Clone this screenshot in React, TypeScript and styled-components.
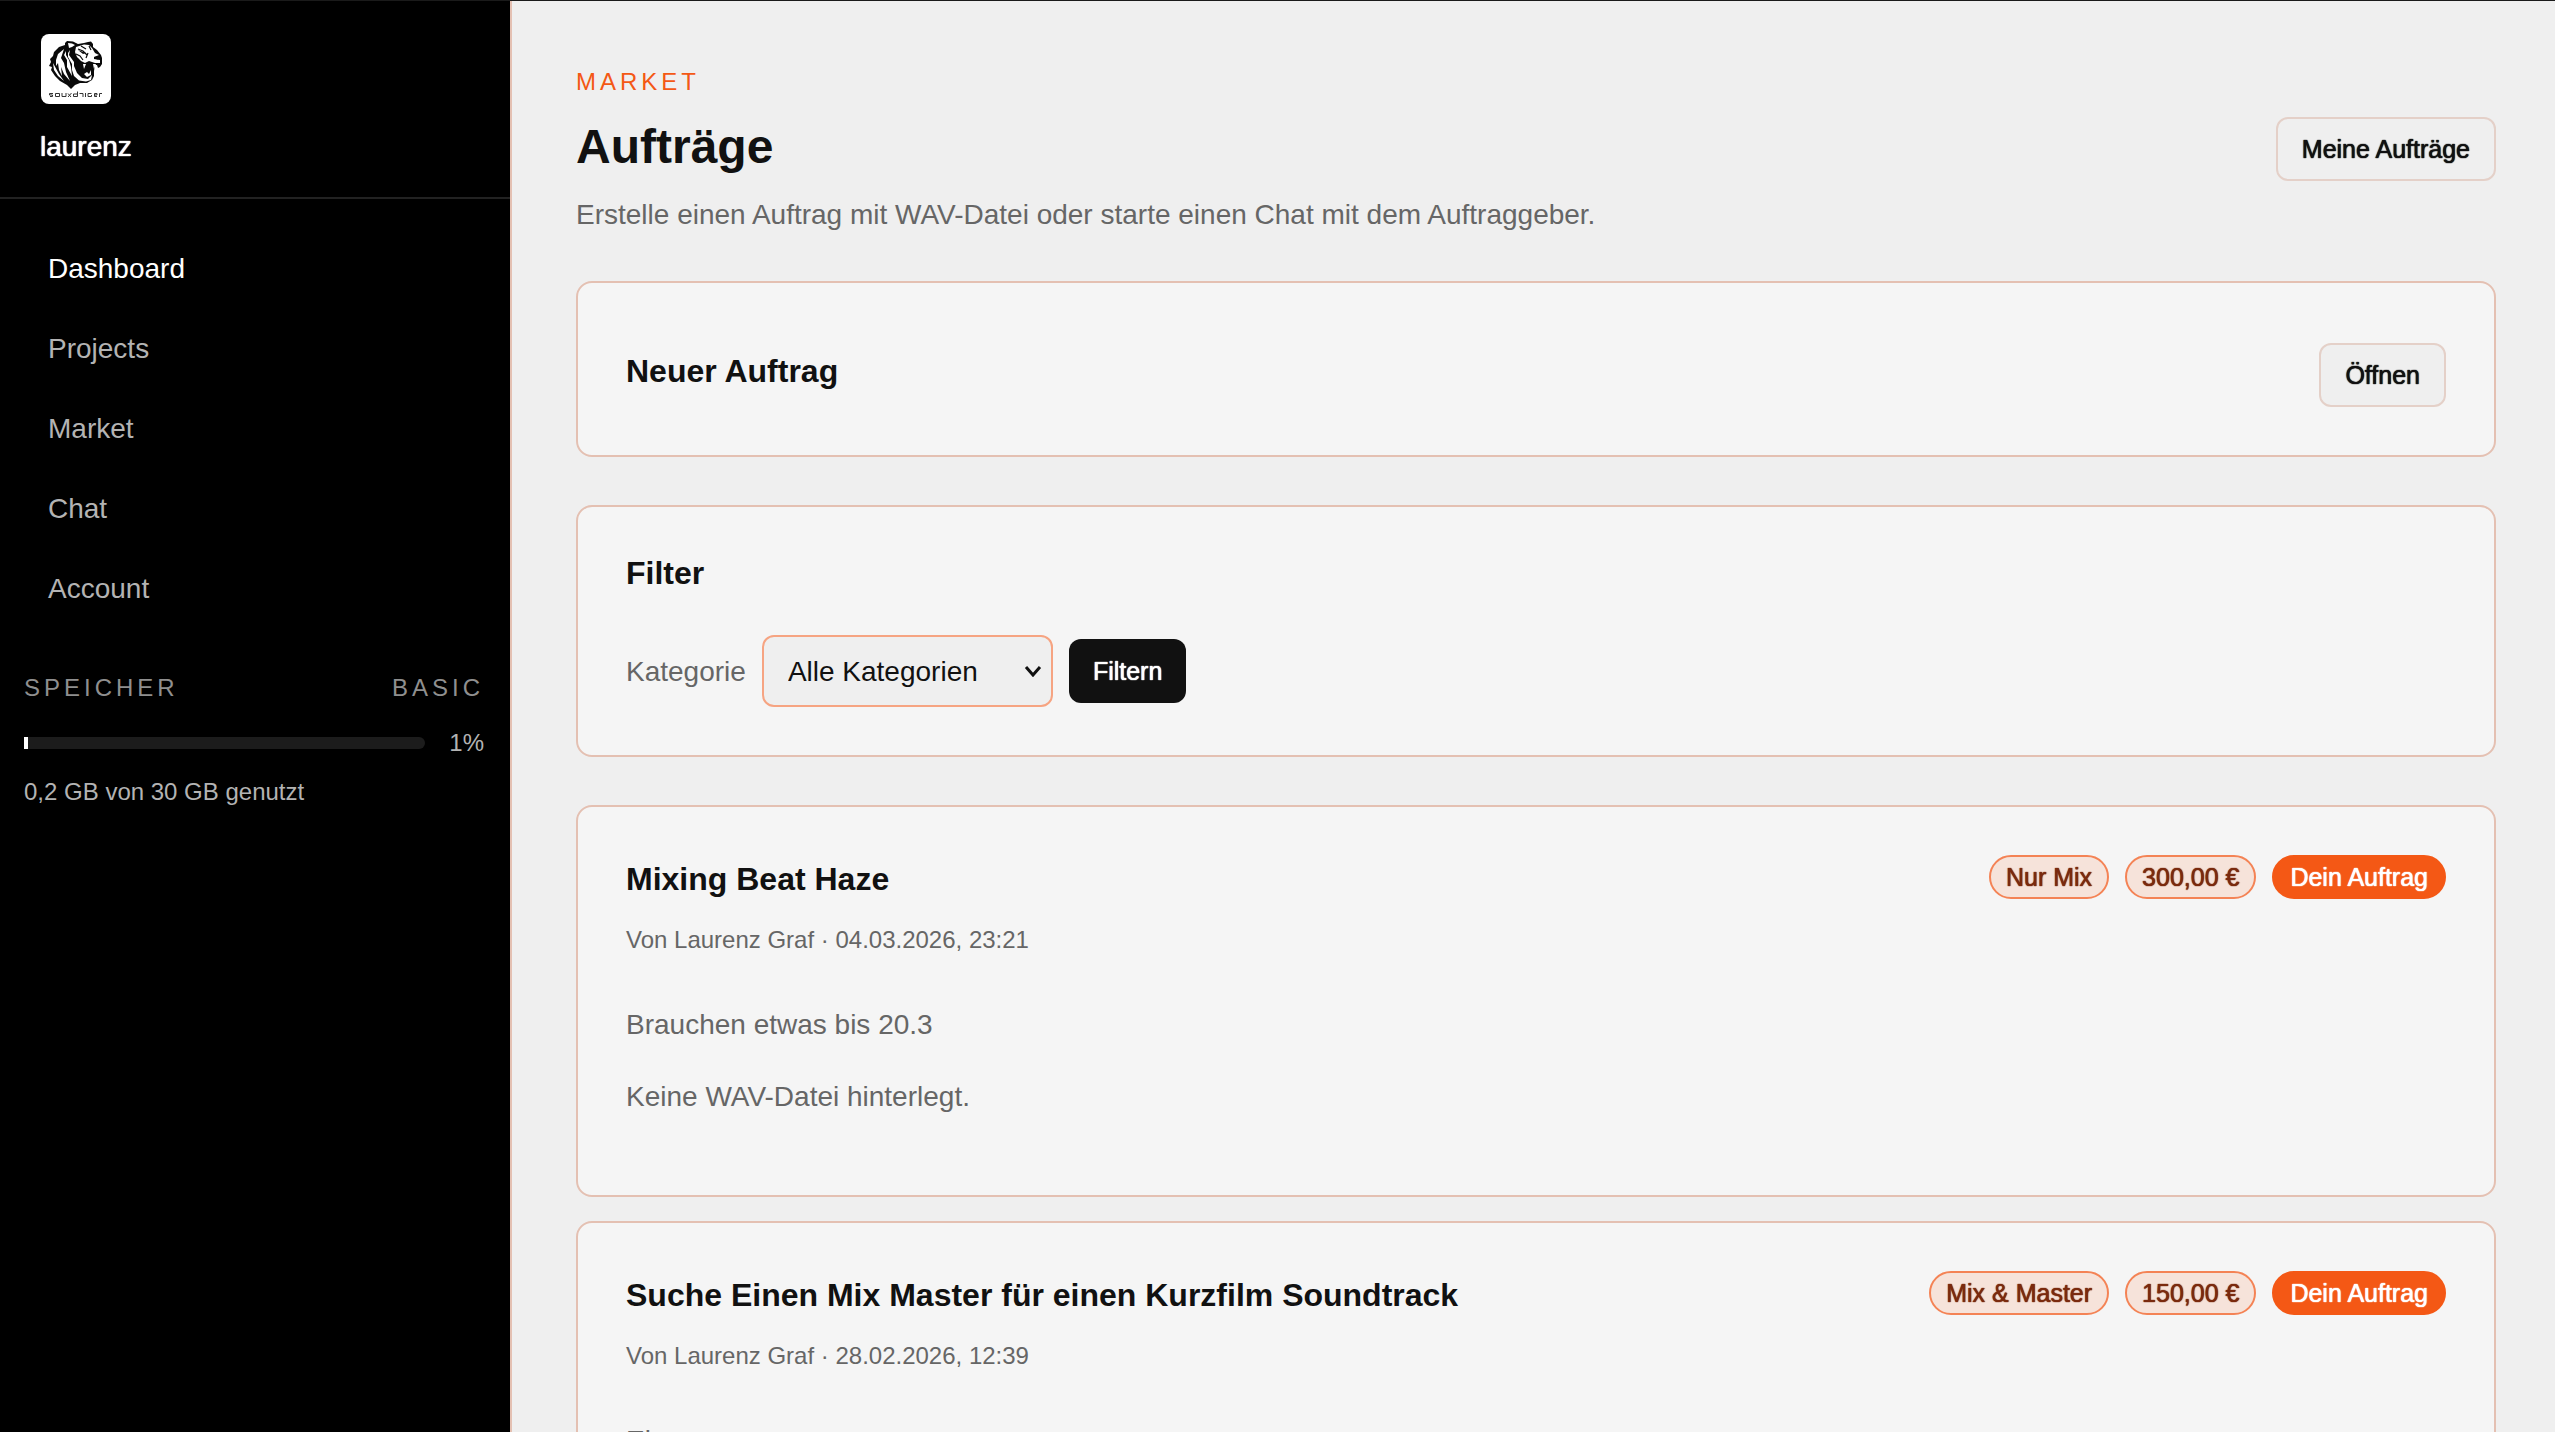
import React from 'react';
import styled, { createGlobalStyle, css } from 'styled-components';

const GlobalStyle = createGlobalStyle`
  *, *::before, *::after { box-sizing: border-box; }
  html { background: #efefef; }
  body {
    margin: 0;
    border-top: 1px solid #1a1a1a;
    color: #111111;
    font-family: "Liberation Sans", Arial, Helvetica, sans-serif;
    font-size: 28px;
    line-height: 36px;
    height: 100vh;
    overflow: hidden;
  }
  h1, h2, p { margin: 0; }
  button, select { font: inherit; color: inherit; cursor: pointer; }
`;

const medium = css`
  text-shadow: 0 0 1px currentColor, 0 0 1px currentColor;
`;

const Shell = styled.div`
  display: grid;
  grid-template-columns: 512px minmax(0, 1fr);
  min-height: 100vh;
`;

const Sidebar = styled.aside`
  background: #000000;
  border-right: 2px solid #e4c0b2;
`;

const Brand = styled.div`
  display: flex;
  flex-direction: column;
  gap: 24px;
  padding: 32px 40px;
  border-bottom: 2px solid #222222;
  color: #ffffff;
`;

const LogoTile = styled.svg`
  display: block;
  width: 72px;
  height: 72px;
`;

const UserName = styled.span`
  ${medium}
`;

const Nav = styled.nav`
  display: flex;
  flex-direction: column;
  gap: 8px;
  padding: 34px 24px 0;
`;

const NavLink = styled.a<{ $active?: boolean }>`
  padding: 18px 24px;
  color: ${(p) => (p.$active ? '#ffffff' : '#b3b3b3')};
  text-decoration: none;
`;

const Storage = styled.section`
  display: flex;
  flex-direction: column;
  gap: 13px;
  padding: 45px 26px 45px 24px;
  color: #b3b3b3;
  font-size: 24px;
`;

const StorageHead = styled.div`
  display: flex;
  justify-content: space-between;
  padding-bottom: 6px;
  color: #8f8f8f;
  letter-spacing: 4px;
  text-transform: uppercase;
`;

const Meter = styled.div`
  display: flex;
  align-items: center;
  gap: 24px;
`;

const Track = styled.div`
  flex: 1;
  height: 12px;
  border-radius: 0 6px 6px 0;
  background: #1c1c1c;
  overflow: hidden;
`;

const Fill = styled.div`
  height: 100%;
  background: #ffffff;
`;

const Main = styled.main`
  display: flex;
  flex-direction: column;
  gap: 48px;
  padding: 63px 59px 64px 64px;
`;

const PageHead = styled.header`
  display: flex;
  align-items: center;
  justify-content: space-between;
`;

const Eyebrow = styled.p`
  color: #f45815;
  font-size: 24px;
  letter-spacing: 4px;
  text-transform: uppercase;
`;

const PageTitle = styled.h1`
  padding: 15px 0 18px;
  font-size: 48px;
  line-height: 64px;
`;

const Muted = styled.p`
  color: #666666;
`;

const Card = styled.section`
  padding: 48px;
  border: 2px solid #e4c0b2;
  border-radius: 16px;
  background: #f5f5f5;
`;

const CardTitle = styled.h2`
  font-size: 32px;
  line-height: 36px;
`;

const SplitRow = styled.div`
  display: flex;
  align-items: flex-start;
  justify-content: space-between;
`;

const NewJobRow = styled(SplitRow)`
  padding-top: 12px;

  ${CardTitle} {
    padding-top: 10px;
  }
`;

const Button = styled.button<{ $dark?: boolean }>`
  height: 64px;
  padding: 0 24px;
  border: ${(p) => (p.$dark ? '0' : '2px solid #e4d0c8')};
  border-radius: 12px;
  background: ${(p) => (p.$dark ? '#111111' : '#efefef')};
  color: ${(p) => (p.$dark ? '#ffffff' : '#111111')};
  font-size: 25px;
  white-space: nowrap;
  ${medium}
`;

const FilterForm = styled.form`
  display: flex;
  align-items: center;
  gap: 16px;
  padding-top: 44px;
`;

const FilterLabel = styled.label`
  padding-top: 2px;
  color: #666666;
`;

const SelectWrap = styled.div`
  display: grid;
  align-items: center;
`;

const Select = styled.select`
  grid-area: 1 / 1;
  width: 291px;
  height: 72px;
  padding: 2px 24px 0;
  border: 2px solid #f6a482;
  border-radius: 12px;
  background: #efefef;
  appearance: none;
`;

const Chevron = styled.svg`
  grid-area: 1 / 1;
  justify-self: end;
  width: 18px;
  height: 12px;
  margin-right: 11px;
  pointer-events: none;
`;

const JobList = styled.div`
  display: flex;
  flex-direction: column;
  gap: 24px;
`;

const JobInfo = styled.div`
  display: flex;
  flex-direction: column;
  gap: 25px;
  padding-top: 6px;
`;

const JobMeta = styled.p`
  color: #666666;
  font-size: 24px;
`;

const JobBody = styled.div`
  display: flex;
  flex-direction: column;
  gap: 36px;
  padding: 49px 0 32px;
`;

const Tags = styled.div`
  display: flex;
  gap: 16px;
`;

const Tag = styled.span<{ $own?: boolean }>`
  display: inline-flex;
  align-items: center;
  height: 44px;
  padding: 0 ${(p) => (p.$own ? 16 : 15)}px;
  border: 2px solid ${(p) => (p.$own ? '#f45815' : '#f48355')};
  border-radius: 22px;
  background: ${(p) => (p.$own ? '#f45815' : '#f6e3da')};
  color: ${(p) => (p.$own ? '#ffffff' : '#7a2a0e')};
  font-size: 25px;
  white-space: nowrap;
  ${medium}
`;

function Logo() {
  return (
    <LogoTile viewBox="0 0 72 72" role="img" aria-label="Soundtiger">
      <rect x="1" y="1" width="70" height="70" rx="8" fill="#fff" />
      <path
        fill="#0a0a0a"
        d="M25 10 L27 8 L33 8.500 L38 11 L44 10 L48 9 L51 8.500 L53 11 L53 14 L57 17 L61 22 L62 25 L62 31 L60 34 L58 35 L57 32 L55 32 L54 38 L54 43 L52 47 L47 50 L40 50 L35 52 L31 56 L27 52 L20 48 L15 43 L11 37 L12 34 L9 33 L11 29 L10 26 L13 23 L14 19 L19 14 L25 12 Z"
      />
      <g fill="#fff">
        <path d="M28 10 L32 10.500 L35 12 L32 14 L29 15 Z" />
        <path d="M36 14 L44 11.500 L49 12 L52 15 L55 20 L59 22 L54 24 L54 26 L60 27 L60 30 L55 30 L49 28 L45 30 L41 28 L37 24 L35 19 Z" />
        <path d="M24 16 L18 21 L16 27 L16 33 L18 30 L19 37 L22 43 L21 34 L24 41 L30 48 L26 39 L24 30 L21 25 Z" />
        <path d="M26 18 L24 22 L27 27 L27 34 L32 43 L31 34 L29 27 L26 22 Z" />
        <path d="M30 17 L29 22 L34 29 L34 33 L37 40 L42 45 L48 46 L52 42 L51 47 L46 48.500 L39 47.500 L34 43 L32 37 L32 31 L28 24 L28 20 Z" />
        <path d="M13 30 L14 37 L18 43 L24 48 L19 41 Z" />
        <path d="M43 31 L44 36 L46 31 Z M53 31 L54 36 L56 31 Z M44 41 L47 39 L49 41 L51 37 L51 42 L47 44 Z" />
      </g>
      <path
        fill="none"
        stroke="#0a0a0a"
        strokeWidth="1.200"
        d="M38 16 L43 18 L47 22 M41 13 L46 16 M49 13 L51 17 M36 21 L40 23 L43 27 M38 26 L40 30 M48 20 L46 25"
      />
      <path fill="#0a0a0a" d="M54 24 L61 23 L60 26 L57 26.500 Z M38 17 L46 20 L43 21 Z" />
      <path
        fill="none"
        stroke="#333"
        strokeWidth="1"
        d="M13 60.500 H9.500 V62 H12.500 V63.500 H10 M15.500 60.500 H19.500 V63.500 H15.500 Z M22 60 V63.500 H26 V60 M28 60.500 L31 64 M31.500 60 L28 64 M37.500 58.500 V63.500 H33.500 V61 H37 M39.500 60.500 H43 V64 M45.500 60 V64 M51.500 60.500 H48 V63.500 H51.500 V62 M57 63.500 H54.500 V60.500 H57 V62 H54.500 M59.500 64 V60.500 H62"
      />
    </LogoTile>
  );
}

const navItems = ['Dashboard', 'Projects', 'Market', 'Chat', 'Account'];

const jobs = [
  {
    title: 'Mixing Beat Haze',
    meta: 'Von Laurenz Graf · 04.03.2026, 23:21',
    kind: 'Nur Mix',
    price: '300,00 €',
    body: ['Brauchen etwas bis 20.3', 'Keine WAV-Datei hinterlegt.'],
  },
  {
    title: 'Suche Einen Mix Master für einen Kurzfilm Soundtrack',
    meta: 'Von Laurenz Graf · 28.02.2026, 12:39',
    kind: 'Mix & Master',
    price: '150,00 €',
    body: ['Ein'],
  },
];

const usedPercent = 1;

export default function App() {
  return (
    <>
      <GlobalStyle />
      <Shell>
        <Sidebar>
          <Brand>
            <Logo />
            <UserName>laurenz</UserName>
          </Brand>
          <Nav>
            {navItems.map((item) => (
              <NavLink key={item} href={`#${item.toLowerCase()}`} $active={item === 'Dashboard'}>
                {item}
              </NavLink>
            ))}
          </Nav>
          <Storage>
            <StorageHead>
              <span>Speicher</span>
              <span>Basic</span>
            </StorageHead>
            <Meter>
              <Track>
                <Fill style={{ width: `${usedPercent}%` }} />
              </Track>
              <span>{usedPercent}%</span>
            </Meter>
            <span>0,2 GB von 30 GB genutzt</span>
          </Storage>
        </Sidebar>
        <Main>
          <PageHead>
            <div>
              <Eyebrow>Market</Eyebrow>
              <PageTitle>Aufträge</PageTitle>
              <Muted>Erstelle einen Auftrag mit WAV-Datei oder starte einen Chat mit dem Auftraggeber.</Muted>
            </div>
            <Button type="button">Meine Aufträge</Button>
          </PageHead>
          <Card>
            <NewJobRow>
              <CardTitle>Neuer Auftrag</CardTitle>
              <Button type="button">Öffnen</Button>
            </NewJobRow>
          </Card>
          <Card>
            <CardTitle>Filter</CardTitle>
            <FilterForm onSubmit={(e) => e.preventDefault()}>
              <FilterLabel htmlFor="category">Kategorie</FilterLabel>
              <SelectWrap>
                <Select id="category" defaultValue="all">
                  <option value="all">Alle Kategorien</option>
                  <option value="mix">Nur Mix</option>
                  <option value="mix-master">Mix &amp; Master</option>
                </Select>
                <Chevron viewBox="0 0 18 12" aria-hidden="true">
                  <path d="M2 2 L9 10 L16 2" fill="none" stroke="#111" strokeWidth="3" />
                </Chevron>
              </SelectWrap>
              <Button type="submit" $dark>Filtern</Button>
            </FilterForm>
          </Card>
          <JobList>
            {jobs.map((job) => (
              <Card as="article" key={job.title}>
                <SplitRow>
                  <JobInfo>
                    <CardTitle>{job.title}</CardTitle>
                    <JobMeta>{job.meta}</JobMeta>
                  </JobInfo>
                  <Tags>
                    <Tag>{job.kind}</Tag>
                    <Tag>{job.price}</Tag>
                    <Tag $own>Dein Auftrag</Tag>
                  </Tags>
                </SplitRow>
                <JobBody>
                  {job.body.map((line) => (
                    <Muted key={line}>{line}</Muted>
                  ))}
                </JobBody>
              </Card>
            ))}
          </JobList>
        </Main>
      </Shell>
    </>
  );
}
